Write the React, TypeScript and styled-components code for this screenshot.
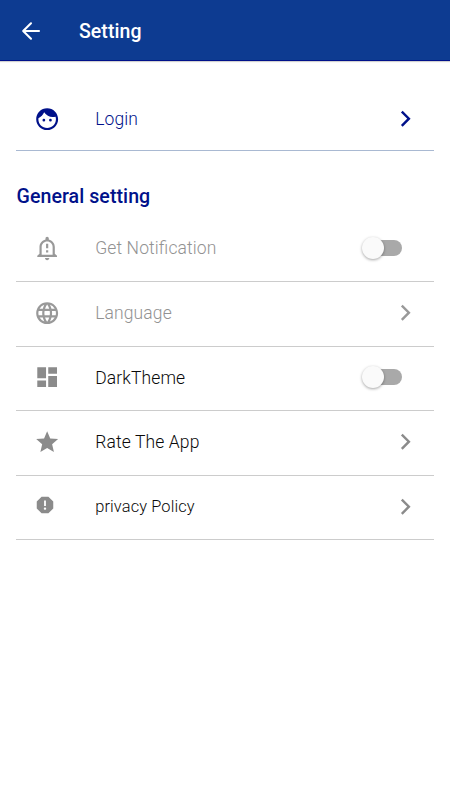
import React from 'react';
import styled, { createGlobalStyle } from 'styled-components';
import type { IconType } from 'react-icons';
import { MdFace, MdOutlineNotificationImportant, MdLanguage, MdDashboard, MdStar, MdReport } from 'react-icons/md';

const NAVY = '#00118a';
const GREY = '#8b8b8b';

const Global = createGlobalStyle`
  html, body { margin: 0; background: #fff; }
  * { box-sizing: border-box; }
  svg { display: block; flex: none; }
`;

const Screen = styled.div`
  width: 450px;
  height: 800px;
  overflow: hidden;
  background: #fff;
  font-family: Roboto, sans-serif;
`;

const AppBar = styled.header`
  display: flex;
  align-items: center;
  gap: 37px;
  height: 61px;
  padding: 1px 21px 0;
  background: #0d3b91;
  border-bottom: 1px solid #00118a;
  box-shadow: 0 1px 1px rgba(0, 0, 0, 0.18);
  color: #fff;
`;

const Title = styled.h1`
  margin: 0;
  padding-top: 3px;
  font-size: 19.5px;
  font-weight: 500;
  line-height: 24px;
  letter-spacing: 0.06px;
`;

const Content = styled.main`
  padding: 26px 16px 0;
`;

const Section = styled.h2`
  margin: 0;
  height: 66px;
  padding: 34px 0 0 0.5px;
  color: ${NAVY};
  font-size: 19.6px;
  font-weight: 500;
  line-height: 24px;
  letter-spacing: 0.06px;
`;

const Row = styled.div<{ $line?: string; $h: number; $drop?: number }>`
  display: flex;
  align-items: center;
  height: ${(p) => p.$h}px;
  padding: ${(p) => p.$drop ?? 0}px 20px ${(p) => (p.$drop ? 0 : 2)}px 18px;
  border-bottom: 1px solid ${(p) => p.$line ?? '#cccccc'};
`;

const IconSlot = styled.span<{ $color: string; $small?: boolean }>`
  display: flex;
  width: 61.2px;
  color: ${(p) => p.$color};
  padding-bottom: ${(p) => (p.$small ? 4 : 0)}px;
`;

const Label = styled.span<{ $color: string; $size?: number }>`
  flex: 1;
  color: ${(p) => p.$color};
  font-size: ${(p) => p.$size ?? 17.5}px;
  font-weight: 360;
  line-height: 24px;
  letter-spacing: 0.12px;
  font-feature-settings: 'liga' 1;
`;

const Track = styled.span`
  display: flex;
  align-items: center;
  width: 36px;
  height: 16px;
  margin: 0 12px 1px 0;
  border-radius: 8px;
  background: #a9a9a9;
`;

const Thumb = styled.span`
  width: 22px;
  height: 22px;
  margin-left: -4px;
  border-radius: 50%;
  background: #fafafa;
  box-shadow: 0 1px 3px rgba(0, 0, 0, 0.36);
`;

const BackArrow = () => (
  <svg width="21" height="22" viewBox="0 0 21 22" fill="none" stroke="currentColor" strokeWidth="2.1" strokeLinecap="round" strokeLinejoin="round">
    <path d="M18 11H2.6M10 3.3L2.2 11L10 18.7" />
  </svg>
);

const Chevron = ({ color }: { color: string }) => (
  <svg width="18" height="22" viewBox="0 0 18 22" fill="none" stroke={color} strokeWidth="2.4">
    <path d="M5.8 3.6L12.9 10.7L5.8 17.8" />
  </svg>
);

const Switch = () => (
  <Track role="switch" aria-checked={false}>
    <Thumb />
  </Track>
);

type Item = { label: string; icon: IconType; text: string; tint: string; toggle?: boolean; small?: boolean; size?: number; iconSize?: number; h: number };

const items: Item[] = [
  { label: 'Get Notification', icon: MdOutlineNotificationImportant, text: '#929292', tint: '#999', toggle: true, h: 65 },
  { label: 'Language', icon: MdLanguage, text: '#929292', tint: '#999', h: 65 },
  { label: 'DarkTheme', icon: MdDashboard, text: '#0a0a0a', tint: GREY, toggle: true, h: 64 },
  { label: 'Rate The App', icon: MdStar, text: '#0a0a0a', tint: GREY, h: 65 },
  { label: 'privacy Policy', icon: MdReport, text: '#0a0a0a', tint: GREY, small: true, size: 16.4, iconSize: 22, h: 64 },
];

export default function App() {
  return (
    <Screen>
      <Global />
      <AppBar>
        <BackArrow />
        <Title>Setting</Title>
      </AppBar>
      <Content>
        <Row $h={64} $line="#a9b9d2" $drop={1.5}>
          <IconSlot $color={NAVY}><MdFace size={26.3} /></IconSlot>
          <Label $color={NAVY}>Login</Label>
          <Chevron color={NAVY} />
        </Row>
        <Section>General setting</Section>
        {items.map(({ label, icon: Icon, text, tint, toggle, small, size, iconSize, h }) => (
          <Row key={label} $h={h}>
            <IconSlot $color={tint} $small={small}><Icon size={iconSize ?? 26.3} /></IconSlot>
            <Label $color={text} $size={size}>{label}</Label>
            {toggle ? <Switch /> : <Chevron color={tint} />}
          </Row>
        ))}
      </Content>
    </Screen>
  );
}
